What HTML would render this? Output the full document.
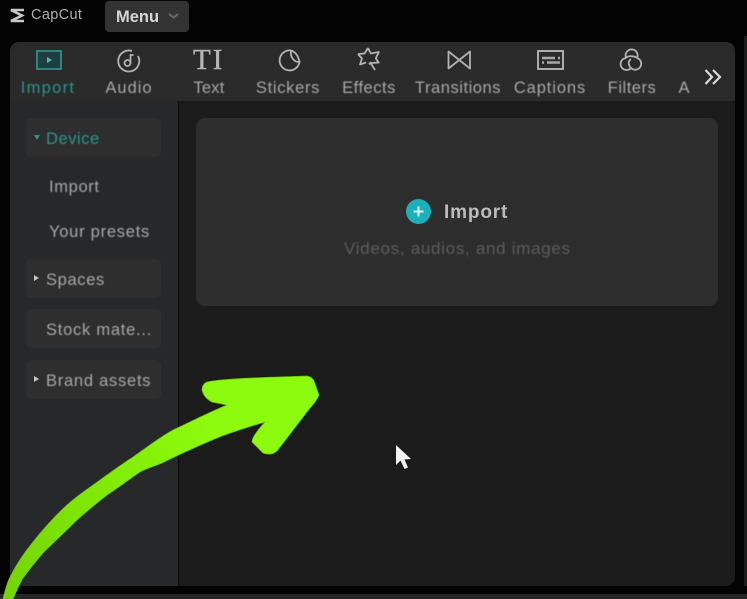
<!DOCTYPE html>
<html>
<head>
<meta charset="utf-8">
<style>
html,body{margin:0;padding:0;background:#030303;}
body{width:747px;height:599px;position:relative;overflow:hidden;font-family:"Liberation Sans",sans-serif;}
.abs{position:absolute;}
.t{position:absolute;white-space:nowrap;line-height:20px;height:20px;transform:translateX(-50%);font-size:16.5px;color:#a8a8a8;top:78px;filter:blur(.4px);}
.s{position:absolute;white-space:nowrap;font-size:16.5px;color:#a8a8a8;line-height:20px;letter-spacing:.75px;filter:blur(.4px);}
.b{position:absolute;left:26px;width:135px;background:#2e2e2f;border-radius:5px;}
.tri{position:absolute;left:34px;width:0;height:0;border-left:5px solid #c5c5c5;border-top:3.5px solid transparent;border-bottom:3.5px solid transparent;}
svg{position:absolute;overflow:visible;}
</style>
</head>
<body>
<div class="abs" style="left:0;top:594px;width:747px;height:5px;background:#262626;"></div>
<div class="abs" style="left:744px;top:36px;width:3px;height:550px;background:#1c1c1c;"></div>

<!-- logo -->
<svg style="left:9px;top:8px" width="16" height="15" viewBox="0 0 16 15" fill="none" stroke="#c8c8c8" stroke-width="2.600"><path d="M15 2H2l11 5.500L2 13h13"/></svg>
<div class="abs" style="left:31px;top:6px;font-size:14.500px;line-height:18px;color:#b0b0b0;letter-spacing:.35px;filter:blur(.3px)">CapCut</div>

<!-- menu -->
<div class="abs" style="left:105px;top:1px;width:84px;height:31px;border-radius:4px;background:#333333;"></div>
<div class="abs" style="left:116px;top:7px;font-size:16.500px;line-height:20px;font-weight:bold;color:#d6d6d6;">Menu</div>
<svg style="left:168px;top:13px" width="11" height="6" viewBox="0 0 11 6" fill="none" stroke="#6a6a6a" stroke-width="2"><path d="M1 1l4.500 3.500L10 1"/></svg>

<!-- panel -->
<div class="abs" style="left:10px;top:42px;width:725px;height:544px;border-radius:9px;background:#1b1b1b;overflow:hidden;">
  <div class="abs" style="left:0;top:0;width:725px;height:59px;background:#2a2a2b;"></div>
  <div class="abs" style="left:0;top:59px;width:168px;height:485px;background:#27282a;"></div>
  <div class="abs" style="left:168px;top:59px;width:1px;height:485px;background:#0c0c0c;"></div>
</div>

<!-- tab icons -->
<svg style="left:36px;top:50px" width="26" height="20" viewBox="0 0 26 20" fill="none"><rect x="1" y="1" width="24" height="18" stroke="#2f8f8a" stroke-width="1.800"/><rect x="2" y="2" width="22" height="16" fill="#1f3e3f"/><path d="M11 7l5 3-5 3z" fill="#4bb5ae"/></svg>
<svg style="left:116px;top:48px" width="25" height="25" viewBox="0 0 25 25" fill="none" stroke="#b2b2b2" stroke-width="1.800"><path d="M16 3a10.500 10.500 0 1 0 6 5"/><circle cx="11.500" cy="15" r="3"/><path d="M14.500 15V7h3"/></svg>
<div class="abs" style="left:193px;top:44px;font-family:'Liberation Serif',serif;font-size:29px;line-height:32px;color:#b5b5b5;letter-spacing:2px;-webkit-text-stroke:.4px #b5b5b5;">TI</div>
<svg style="left:277px;top:48px" width="25" height="25" viewBox="0 0 25 25" fill="none" stroke="#b2b2b2" stroke-width="1.800"><path d="M14 2.500A10 10 0 1 0 22.500 14C17 14.500 13 9 14 2.500C18 3.500 21.500 8 22.500 14"/></svg>
<svg style="left:356px;top:46px" width="25" height="26" viewBox="0 0 25 26" fill="none" stroke="#b2b2b2" stroke-width="1.800" stroke-linejoin="round"><path d="M12 2l2.800 5.500 8-1.500-3 6.500 3 4-7 .5-3 1M2 8l6.500-.5L12 2M2 8l4 4.500-2 6 6-2M14 16l5 8"/></svg>
<svg style="left:447px;top:50px" width="25" height="20" viewBox="0 0 25 20" fill="none" stroke="#b2b2b2" stroke-width="1.800" stroke-linejoin="round"><path d="M1.500 1.500L23 18.500V1.500L1.500 18.500Z"/></svg>
<svg style="left:537px;top:50px" width="27" height="20" viewBox="0 0 27 20" fill="none"><rect x="1" y="1" width="25" height="18" stroke="#b2b2b2" stroke-width="1.900"/><path d="M5 8h13M21 8h2M5 12.500h2M10 12.500h13" stroke="#a8a8a8" stroke-width="2.400"/></svg>
<svg style="left:618px;top:47px" width="26" height="26" viewBox="0 0 26 26" fill="none" stroke="#b2b2b2" stroke-width="1.800"><path d="M8 10.500A6 6 0 1 1 19 11M8 11A6 6 0 1 0 13 21M19 11A6 6 0 1 1 13 21M8 11C10 8.500 16 8.500 19 11M13 21C10 18 10 14 13 12"/></svg>

<!-- tab labels -->
<div class="t" style="left:48px;color:#2c938d;letter-spacing:1.300px;">Import</div>
<div class="t" style="left:129px;letter-spacing:1px;">Audio</div>
<div class="t" style="left:209px;letter-spacing:.25px;">Text</div>
<div class="t" style="left:288px;letter-spacing:.7px;">Stickers</div>
<div class="t" style="left:369px;letter-spacing:.5px;">Effects</div>
<div class="t" style="left:458px;letter-spacing:.55px;">Transitions</div>
<div class="t" style="left:550px;letter-spacing:.9px;">Captions</div>
<div class="t" style="left:632px;letter-spacing:.5px;">Filters</div>
<div class="t" style="left:684px;">A</div>
<svg style="left:704px;top:69px" width="18" height="16" viewBox="0 0 18 16" fill="none" stroke="#d8d8d8" stroke-width="2.200"><path d="M1.500 1l6.500 7-6.500 7M9 1l7 7-7 7"/></svg>

<!-- sidebar -->
<div class="b" style="top:118px;height:39px;"></div>
<div class="abs" style="left:34px;top:135px;width:0;height:0;border-top:5px solid #2c938d;border-left:3px solid transparent;border-right:3px solid transparent;"></div>
<div class="s" style="left:46px;top:129px;color:#2c938d;letter-spacing:.55px;">Device</div>
<div class="s" style="left:49px;top:177px;letter-spacing:.65px;">Import</div>
<div class="s" style="left:49px;top:222px;">Your presets</div>
<div class="b" style="top:259px;height:39px;"></div>
<div class="tri" style="top:275px;"></div>
<div class="s" style="left:46px;top:270px;letter-spacing:.65px;">Spaces</div>
<div class="b" style="top:309px;height:39px;"></div>
<div class="s" style="left:46px;top:320px;">Stock mate...</div>
<div class="b" style="top:360px;height:39px;"></div>
<div class="tri" style="top:376px;"></div>
<div class="s" style="left:46px;top:371px;">Brand assets</div>

<!-- import card -->
<div class="abs" style="left:196px;top:118px;width:522px;height:188px;border-radius:9px;background:#2d2d2e;"></div>
<div class="abs" style="left:406px;top:199px;width:25px;height:25px;border-radius:50%;background:#1eb0b8;"></div>
<svg style="left:406px;top:199px" width="25" height="25" viewBox="0 0 25 25" stroke="#d8f6f6" stroke-width="2"><path d="M12.500 7.500v10M7.500 12.500h10"/></svg>
<div class="abs" style="left:444px;top:203px;font-size:19px;line-height:20px;font-weight:bold;color:#bcbcbc;letter-spacing:.85px;filter:blur(.3px)">Import</div>
<div class="abs" style="left:344px;top:238.500px;font-size:17px;line-height:20px;color:#5c5c5c;letter-spacing:.7px;filter:blur(.4px)">Videos, audios, and images</div>

<!-- green arrow -->
<svg style="left:0;top:0" width="747" height="599" viewBox="0 0 747 599">
<defs><linearGradient id="g" gradientUnits="userSpaceOnUse" x1="5" y1="595" x2="200" y2="420"><stop offset="0" stop-color="#74d405"/><stop offset=".55" stop-color="#80ea06"/><stop offset="1" stop-color="#8cfb0d"/></linearGradient></defs>
<path fill="url(#g)" stroke="#6fbf0a" stroke-width=".7" stroke-linejoin="round" d="M3 599C5 590 7 583 10 577C16 565 24 553 33 542C44 528 56 515 67 505C78 495 89 488 100 480C111 472 122 464 133 457C146 448 160 437 173 430C190 422 210 412 227 405L212 402Q204 398 202 390Q202 384 207 382C225 378 280 377 307 376Q312 377 314 381L319 395Q316 402 310 408L277 451Q272 456 263 453L252 442Q252 436 265 422C245 428 232 432 217 438C198 446 180 454 162 463C155 466 147 468 140 472C128 480 118 488 107 495C97 503 87 511 77 520C65 532 54 542 43 553C36 561 29 570 23 578C19 585 16 592 13 599Z"/>
<path fill="#f2f2f2" d="M396 445V465L400.500 460.500L404.500 469L408 467.500L404.500 459.500L411 459Z"/>
</svg>
</body>
</html>
